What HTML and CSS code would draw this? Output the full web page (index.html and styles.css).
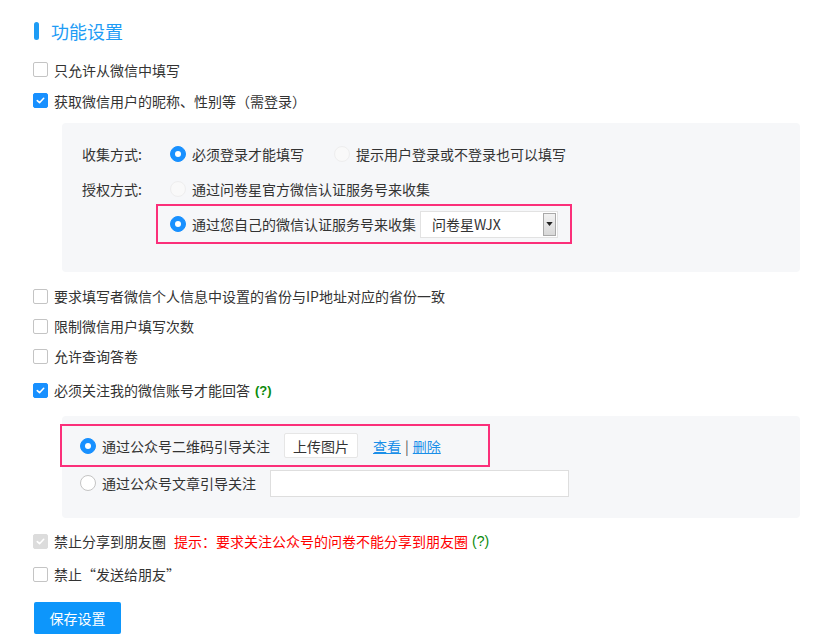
FILE: index.html
```html
<!DOCTYPE html>
<html lang="zh-CN">
<head>
<meta charset="utf-8">
<title>功能设置</title>
<link rel="stylesheet" href="styles.css">
</head>
<body>
<div class="page">
  <h2 class="title"><span class="title-bar"></span>功能设置</h2>

  <div class="row"><span class="cb"></span><span>只允许从微信中填写</span></div>
  <div class="row"><span class="cb on"><svg viewBox="0 0 15 15"><path d="M3.8 7.6 L6.4 10 L11.2 5" fill="none" stroke="#fff" stroke-width="1.8" stroke-linecap="round" stroke-linejoin="round"/></svg></span><span>获取微信用户的昵称、性别等（需登录）</span></div>

  <div class="panel panel-a">
    <div class="prow">
      <span class="plabel">收集方式:</span>
      <span class="opt"><span class="rd on"></span>必须登录才能填写</span>
      <span class="opt opt2"><span class="rd faint"></span>提示用户登录或不登录也可以填写</span>
    </div>
    <div class="prow">
      <span class="plabel">授权方式:</span>
      <span class="opt"><span class="rd faint"></span>通过问卷星官方微信认证服务号来收集</span>
    </div>
    <div class="hl hl-a">
      <span class="opt"><span class="rd on"></span>通过您自己的微信认证服务号来收集</span>
      <span class="select"><span class="select-text">问卷星WJX</span><span class="select-btn"><svg viewBox="0 0 8 5" width="7" height="4"><path d="M0 0 H8 L4 5 Z" fill="#222"/></svg></span></span>
    </div>
  </div>

  <div class="row row-s row-top"><span class="cb"></span><span>要求填写者微信个人信息中设置的省份与IP地址对应的省份一致</span></div>
  <div class="row row-s"><span class="cb"></span><span>限制微信用户填写次数</span></div>
  <div class="row row-s"><span class="cb"></span><span>允许查询答卷</span></div>
  <div class="row row-s row-follow"><span class="cb on"><svg viewBox="0 0 15 15"><path d="M3.8 7.6 L6.4 10 L11.2 5" fill="none" stroke="#fff" stroke-width="1.8" stroke-linecap="round" stroke-linejoin="round"/></svg></span><span>必须关注我的微信账号才能回答</span><b class="help">(?)</b></div>

  <div class="panel panel-b">
    <div class="hl hl-b">
      <span class="opt"><span class="rd on"></span>通过公众号二维码引导关注</span>
      <span class="btn-upload">上传图片</span>
      <span class="links"><a href="#" class="lnk">查看</a><span class="sep">|</span><a href="#" class="lnk">删除</a></span>
    </div>
    <div class="brow">
      <span class="opt"><span class="rd"></span>通过公众号文章引导关注</span>
      <span class="text-input"></span>
    </div>
  </div>

  <div class="row row-s row-share"><span class="cb dis"><svg viewBox="0 0 15 15"><path d="M3.8 7.6 L6.4 10 L11.2 5" fill="none" stroke="#fff" stroke-width="1.8" stroke-linecap="round" stroke-linejoin="round"/></svg></span><span>禁止分享到朋友圈</span><span class="tip">提示：要求关注公众号的问卷不能分享到朋友圈</span><span class="help-n">(?)</span></div>
  <div class="row row-s row-send"><span class="cb"></span><span>禁止“发送给朋友”</span></div>

  <div class="save"><span class="btn-save">保存设置</span></div>
</div>
</body>
</html>
```

FILE: styles.css
```css
* { box-sizing: border-box; }
html, body { margin: 0; padding: 0; background: #fff; }
body {
  font-family: "PingFang SC", "Noto Sans CJK SC", "Noto Sans", sans-serif;
  font-size: 14px;
  color: #333;
}
.page { padding: 18px 0 0 33px; width: 827px; }

.title {
  margin: 0 0 10px 0;
  height: 26px;
  display: flex;
  align-items: center;
  font-size: 18px;
  font-weight: normal;
  color: #1e9cf5;
}
.title-bar {
  display: inline-block;
  width: 5px;
  height: 18px;
  border-radius: 3px;
  background: #1e9cf5;
  margin: 0 12px 0 1px;
}

.row {
  height: 31px;
  display: flex;
  align-items: center;
  white-space: nowrap;
}
.row-s { height: 30px; }
.cb {
  width: 15px;
  height: 15px;
  border: 1px solid #c4c4c4;
  border-radius: 2px;
  background: #fff;
  margin-right: 6px;
  flex: none;
  display: flex;
  align-items: center;
  justify-content: center;
}
.cb svg { width: 15px; height: 15px; display: block; }
.cb.on { background: #1890ff; border-color: #1890ff; }
.cb.dis { background: #dcdcdc; border-color: #dcdcdc; }

.help { color: #0a8a0a; font-family: "Liberation Sans", Arial, sans-serif; font-size: 13px; margin-left: 5px; }
.help-n { color: #0a8a0a; font-family: "Liberation Sans", Arial, sans-serif; font-size: 14px; margin-left: 4px; }
.tip { color: #f00; margin-left: 8px; }

.panel {
  margin-left: 29px;
  width: 738px;
  background: #f6f7f9;
  border-radius: 4px;
}
.panel-a { margin-top: 7px; padding: 16px 0 28px 20px; }
.prow { height: 30px; display: flex; align-items: center; white-space: nowrap; }
.prow + .prow { margin-top: 5px; }
.plabel { width: 88px; flex: none; }
.opt { display: inline-flex; align-items: center; white-space: nowrap; }
.opt2 { margin-left: 30px; }
.rd {
  width: 16px;
  height: 16px;
  border-radius: 50%;
  border: 1px solid #c4c4c4;
  background: #fff;
  margin-right: 6px;
  flex: none;
  position: relative;
}
.rd.on { background: #1890ff; border-color: #1890ff; }
.rd.on::after {
  content: "";
  position: absolute;
  left: 4px; top: 4px;
  width: 6px; height: 6px;
  border-radius: 50%;
  background: #fff;
}
.rd.faint { background: #f9f9f9; border-color: #eeeeee; }

.hl { border: 2px solid #fb2f7a; display: flex; align-items: center; white-space: nowrap; }
.hl-a {
  margin-left: 74px;
  width: 416px;
  height: 40px;
  padding-left: 12px;
}
.select {
  margin-left: 4px;
  width: 138px;
  height: 27px;
  background: #fff;
  border: 1px solid #e2e2e2;
  display: flex;
  align-items: center;
  justify-content: space-between;
}
.select-text { padding-left: 11px; }
.select-btn {
  width: 13px;
  height: 23px;
  margin-right: 1px;
  background: linear-gradient(#f2f2f2, #d8d8d8);
  border: 1px solid #a9a9a9;
  display: flex;
  align-items: center;
  justify-content: center;
}
.select-btn svg { display: block; }

.row-top { margin-top: 9px; }
.row-follow { margin-top: 4px; }

.panel-b { margin-top: 11px; padding: 8px 0 18px 0; height: 102px; }
.hl-b {
  margin-left: -2px;
  width: 430px;
  height: 43px;
  padding-left: 18px;
}
.btn-upload {
  margin-left: 14px;
  width: 74px;
  height: 25px;
  background: #fff;
  border: 1px solid #e6e6e6;
  border-radius: 2px;
  display: inline-flex;
  align-items: center;
  justify-content: center;
}
.links { margin-left: 15px; display: inline-flex; align-items: center; }
.lnk { color: #1a8fe8; text-decoration: underline; }
.sep { color: #555; margin: 0 4px; }
.brow { height: 32px; display: flex; align-items: center; padding-left: 18px; }
.text-input {
  margin-left: 14px;
  width: 299px;
  height: 27px;
  background: #fff;
  border: 1px solid #dedede;
}

.row-share { margin-top: 8px; }
.row-send { margin-top: 3px; }
.save { margin-top: 13px; }
.btn-save {
  display: inline-flex;
  align-items: center;
  justify-content: center;
  width: 87px;
  height: 32px;
  background: #0d96fb;
  color: #fff;
  border-radius: 2px;
  margin-left: 1px;
}
```
